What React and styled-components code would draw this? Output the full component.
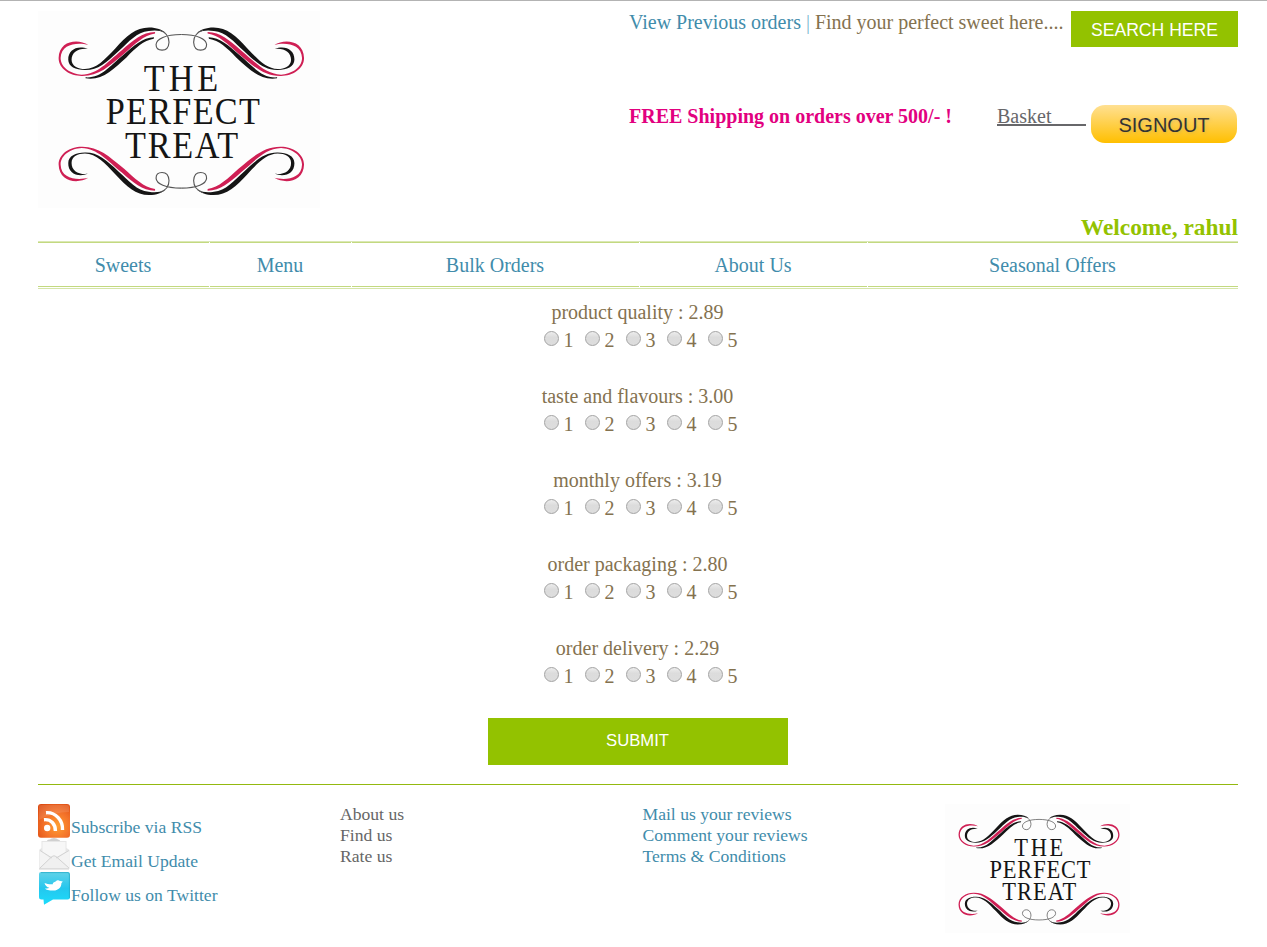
import React from 'react';
import styled, { createGlobalStyle } from 'styled-components';

const GlobalStyle = createGlobalStyle`
  * { box-sizing: border-box; }
  body {
    margin: 0;
    background: #fff;
    color: #84724f;
    font: 20px/23px "Liberation Serif", "Times New Roman", serif;
  }
  a { color: #418cab; text-decoration: none; }
`;

const Page = styled.div`
  min-height: 947px;
  border-top: 1px solid #b3b3b3;
  padding-top: 10px;
`;
const Container = styled.div`
  width: 1200px;
  margin-left: 38px;
`;
const Header = styled.header`
  display: flex;
  justify-content: space-between;
  height: 203px;
`;
const LogoSvg = styled.svg`
  display: block;
  width: ${(p) => p.$width}px;
  height: ${(p) => p.$height}px;
  background: #fdfdfd;
`;
const HeaderTools = styled.div`
  width: 609px;
`;
const ToolRow = styled.div`
  display: flex;
  align-items: flex-start;
  justify-content: space-between;
  height: 94px;
  white-space: nowrap;
`;
const Separator = styled.span`
  color: #7db9cf;
`;
const Tagline = styled.span`
  letter-spacing: -0.01px;
`;
const SearchButton = styled.button`
  width: 167px;
  height: 36px;
  padding: 2px 0 0;
  border: 0;
  background: #93c200;
  color: #fff;
  font: 17.6px "Liberation Sans", Arial, sans-serif;
`;
const Shipping = styled.strong`
  width: 368px;
  color: #e2007f;
`;
const Basket = styled.a`
  && { color: #67676a; }
  height: 21px;
  width: 89px;
  border-bottom: 2px solid #67676a;
`;
const SignoutButton = styled.button`
  width: 146px;
  height: 38px;
  margin: 0 1px 0 5px;
  padding: 2px 0 0;
  border: 0;
  border-radius: 14px;
  background: linear-gradient(#ffe092, #ffbf00);
  color: #333;
  font: 20px "Liberation Sans", Arial, sans-serif;
  text-shadow: 1px 1px 3px #8884;
`;
const Welcome = styled.h3`
  margin: 0;
  color: #93c200;
  font-size: 23.4px;
  line-height: 27px;
  text-align: right;
`;
const Nav = styled.nav`
  display: grid;
  grid-template-columns: 171px 141px 287px 227px 370px;
  gap: 1px;
  height: 48px;
  padding-bottom: 1px;
  border-top: 1px solid #dbe8b5;
  border-bottom: 1px solid #d5e5a8;
`;
const NavItem = styled.a`
  display: flex;
  align-items: center;
  justify-content: center;
  border-top: 1px solid #c3d980;
  border-bottom: 1px solid #c3d980;
  padding: 1px 1px 0 0;
`;
const RatingForm = styled.form`
  display: flex;
  flex-direction: column;
  align-items: center;
  padding-top: 12px;
`;
const Rating = styled.fieldset`
  height: 84px;
  margin: 0;
  padding: 0;
  border: 0;
  text-align: center;
`;
const RatingTitle = styled.div`
  padding-right: 1px;
`;
const Choices = styled.div`
  display: flex;
  width: 188px;
  margin: 5px auto 0;
`;
const Choice = styled.label`
  display: flex;
  flex: 0 0 41px;
  gap: 4.5px;
`;
const Radio = styled.input`
  appearance: none;
  width: 15px;
  height: 15px;
  margin: 2px 0 0;
  border: 1px solid #a3a3a3;
  border-radius: 50%;
  background: linear-gradient(#ededed, #dcdcdc 40%, #dddddd);
`;
const SubmitButton = styled.button`
  width: 300px;
  height: 47px;
  margin: -3px 0 19px;
  padding: 0 1px 2px 0;
  border: 0;
  background: #93c200;
  color: #fff;
  font: 16.67px "Liberation Sans", Arial, sans-serif;
`;
const Footer = styled.footer`
  display: grid;
  grid-template-columns: 302px 302.5px 302.5px 1fr;
  border-top: 1px solid #93b90f;
  padding-top: 19px;
  font-size: 17.6px;
  line-height: 21px;
`;
const FooterColumn = styled.div`
  display: flex;
  flex-direction: column;
  color: #666;
`;
const SocialLink = styled.a`
  display: flex;
  height: 34px;
  gap: 1px;
  padding-right: 10px;
  span { padding-top: 13px; }
`;
const SocialIcon = styled.svg`
  display: block;
  width: 32px;
  height: 34px;
`;

function Swirl({ accent }) {
  return (
    <g>
      <path fill="#cf1f54" d="M175 135C145 127 93 130 92 175C92 205 126 224 155 225C205 222 230 189 276 151C310 121 337 97 376 96L376 101C342 106 315 133 283 162C237 201 205 230 155 229C121 229 86 208 86 175C87 121 145 116 175 135Z" />
      <path fill="#151515" d="M174 147C145 144 125 157 125 180C125 199 144 208 165 208C200 207 224 180 257 145C290 109 318 83 358 83C381 83 397 90 408 99C390 91 376 90 357 93C321 96 298 125 266 154C229 189 203 212 165 211C137 211 115 200 115 180C114 150 142 135 174 147Z" />
      <path fill="none" stroke="#555" strokeWidth="3.4" d="M390 91C408 97 418 111 418 127C417 143 408 151 397 151C386 151 379 144 379 134C380 117 407 104 455 104" />
      {accent && (
        <path fill="#151515" d="M167 233C214 236 236 202 281 165C312 137 339 113 373 112L372 117C341 122 319 144 290 173C249 210 217 244 167 236Z" />
      )}
    </g>
  );
}

function Logo({ width, height }) {
  const lines = [
    ['THE', 342, 273, 224],
    ['PERFECT', 228, 375, 463],
    ['TREAT', 286, 477, 340],
  ];
  const squeeze = 0.88;
  return (
    <LogoSvg $width={width} $height={height} viewBox="24 33 848 594" preserveAspectRatio="none" role="img" aria-label="The Perfect Treat">
      <Swirl accent />
      <g transform="translate(910 0) scale(-1 1)"><Swirl accent /></g>
      <g transform="translate(0 671) scale(1 -1)"><Swirl /></g>
      <g transform="translate(910 671) scale(-1 -1)"><Swirl /></g>
      <g fill="#151515" fontFamily="Liberation Serif, serif" fontSize="117" transform={`scale(${squeeze} 1)`}>
        {lines.map(([text, x, y, length]) => (
          <text key={text} x={x / squeeze} y={y} textLength={length / squeeze} lengthAdjust="spacing">{text}</text>
        ))}
      </g>
    </LogoSvg>
  );
}

function RssIcon() {
  return (
    <SocialIcon viewBox="0 0 32 34">
      <defs>
        <radialGradient id="rss" cx=".6" cy=".65" r=".8">
          <stop offset="0" stopColor="#ffa032" />
          <stop offset=".5" stopColor="#f4732a" />
          <stop offset="1" stopColor="#dc4a10" />
        </radialGradient>
      </defs>
      <rect width="32" height="33.8" rx="3" fill="url(#rss)" />
      <path d="M1 2Q1 1 3 1H29Q31 1 31 3V8Q16 8 1 16Z" fill="#fff" opacity=".12" />
      <circle cx="9.2" cy="24" r="3.2" fill="#fff" />
      <path d="M6 15.7C13 15 17.5 20 17.4 27M8 8.7C18 8 25 17 24.5 26" fill="none" stroke="#fff" strokeWidth="3.4" />
    </SocialIcon>
  );
}

function MailIcon() {
  return (
    <SocialIcon viewBox="0 0 32 34">
      <path d="M9 3Q9 1.5 11 1.5H12Q13 0 16 0T20 1.5Q22 1.5 22 3Z" fill="#d0d0d0" />
      <path d="M3.5 3H28.5V10L31.5 12V31H1V12L3.5 10Z" fill="#e6e6e6" />
      <path d="M4.5 4H27.5V14L16 22L4.5 14Z" fill="#f7f7f7" />
      <path d="M1.5 12L12 20L1.5 30ZM31 12L20 20L31 30Z" fill="#f4f4f4" />
      <path d="M2 30L14 18.5Q16 17 18 18.5L31 30Z" fill="#f0f0f0" />
      <path d="M2 12.5L14 20M31 12.5L18 20M2 30L14 18.5Q16 17 18 18.5L31 30M1 31H31" fill="none" stroke="#cfcfcf" strokeWidth=".9" />
    </SocialIcon>
  );
}

function TwitterIcon() {
  return (
    <SocialIcon viewBox="0 0 32 34">
      <defs>
        <linearGradient id="twitter" x2="0" y2="1">
          <stop offset="0" stopColor="#61d2e8" />
          <stop offset=".5" stopColor="#24c7ee" />
          <stop offset="1" stopColor="#1cdcfb" />
        </linearGradient>
      </defs>
      <path d="M3 0H30Q32 0 32 2V25Q32 27.5 29.5 27.5H15L6 32.8L5.5 27.5H3.5Q1 27.5 1 25V2Q1 0 3 0Z" fill="url(#twitter)" />
      <path d="M3 .6H30Q31.4 .6 31.4 3V26" fill="none" stroke="#22a9c4" opacity=".7" />
      <path d="M6.5 11C9 12.2 12 12.5 14.8 12.3C14.5 10.5 16 10.3 18 9.2C18.6 8.3 20 8 21.2 8.8L24.8 9.4L23.4 11.2C23.4 15.5 20 18.4 15.5 18.6C11.5 18.7 8 17.8 7 16.4C9 16.7 10.6 16.4 11.4 15.8C8.8 15.3 7.2 13.4 6.5 11Z" fill="#fff" />
    </SocialIcon>
  );
}

const navItems = ['Sweets', 'Menu', 'Bulk Orders', 'About Us', 'Seasonal Offers'];
const ratings = [
  ['product quality', '2.89'],
  ['taste and flavours', '3.00'],
  ['monthly offers', '3.19'],
  ['order packaging', '2.80'],
  ['order delivery', '2.29'],
];
const social = [
  [RssIcon, 'Subscribe via RSS'],
  [MailIcon, 'Get Email Update'],
  [TwitterIcon, 'Follow us on Twitter'],
];

export default function App() {
  return (
    <Page>
      <GlobalStyle />
      <Container>
        <Header>
          <Logo width={282} height={197} />
          <HeaderTools>
            <ToolRow>
              <Tagline>
                <a href="#orders">View Previous orders</a> <Separator>|</Separator> Find your perfect sweet here....
              </Tagline>
              <SearchButton>SEARCH HERE</SearchButton>
            </ToolRow>
            <ToolRow>
              <Shipping>FREE Shipping on orders over 500/- !</Shipping>
              <Basket href="#basket">Basket</Basket>
              <SignoutButton>SIGNOUT</SignoutButton>
            </ToolRow>
          </HeaderTools>
        </Header>
        <Welcome>Welcome, rahul</Welcome>
        <Nav>
          {navItems.map((item) => <NavItem key={item} href="#nav">{item}</NavItem>)}
        </Nav>
        <RatingForm onSubmit={(e) => e.preventDefault()}>
          {ratings.map(([name, score]) => (
            <Rating key={name}>
              <RatingTitle>{name} : {score}</RatingTitle>
              <Choices>
                {[1, 2, 3, 4, 5].map((n) => (
                  <Choice key={n}><Radio type="radio" name={name} value={n} />{n}</Choice>
                ))}
              </Choices>
            </Rating>
          ))}
          <SubmitButton>SUBMIT</SubmitButton>
        </RatingForm>
        <Footer>
          <FooterColumn>
            {social.map(([Icon, text]) => (
              <SocialLink key={text} href="#social"><Icon /><span>{text}</span></SocialLink>
            ))}
          </FooterColumn>
          <FooterColumn>
            <span>About us</span>
            <span>Find us</span>
            <span>Rate us</span>
          </FooterColumn>
          <FooterColumn>
            <a href="#mail">Mail us your reviews</a>
            <a href="#comment">Comment your reviews</a>
            <a href="#terms">Terms &amp; Conditions</a>
          </FooterColumn>
          <Logo width={185} height={129} />
        </Footer>
      </Container>
    </Page>
  );
}
